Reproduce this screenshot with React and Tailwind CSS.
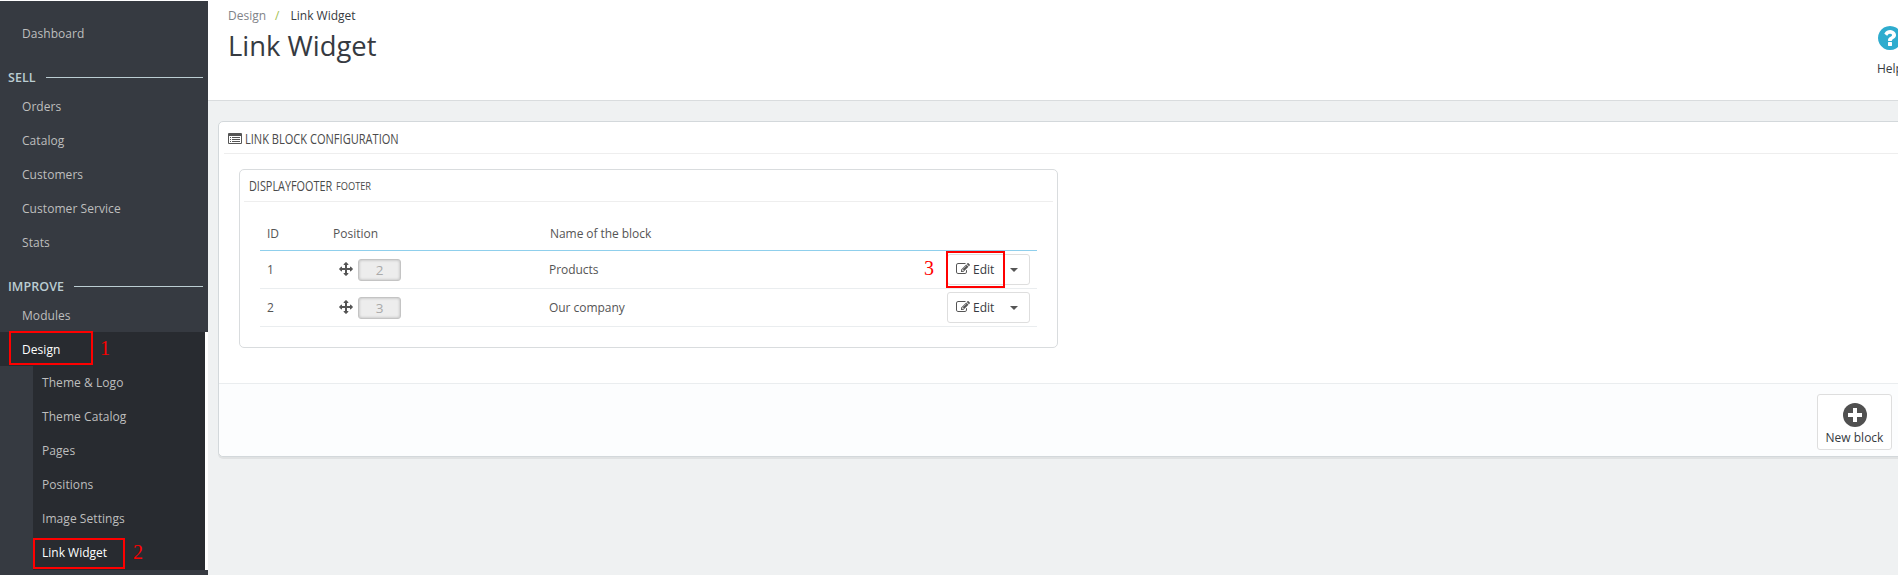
import React from "react";

const ARROWS =
  "M1792 896q0 26-19 45l-256 256q-19 19-45 19t-45-19-19-45v-128h-384v384h128q26 0 45 19t19 45-19 45l-256 256q-19 19-45 19t-45-19l-256-256q-19-19-19-45t19-45 45-19h128v-384h-384v128q0 26-19 45t-45 19-45-19l-256-256q-19-19-19-45t19-45l256-256q19-19 45-19t45 19 19 45v128h384v-384h-128q-26 0-45-19t-19-45 19-45l256-256q19-19 45-19t45 19l256 256q19 19 19 45t-19 45-45 19h-128v384h384v-128q0-26 19-45t45-19 45 19l256 256q19 19 19 45z";
const PENCIL =
  "M888 1184l116-116-152-152-116 116v56h96v96h56zm440-720q-16-16-33 1l-350 350q-17 17-1 33t33-1l350-350q17-17 1-33zm80 594v190q0 119-84.5 203.5t-203.5 84.5h-832q-119 0-203.5-84.5t-84.5-203.5v-832q0-119 84.5-203.5t203.5-84.5h832q63 0 117 25 15 7 18 23 3 17-9 29l-49 49q-14 14-32 8-23-6-45-6h-832q-66 0-113 47t-47 113v832q0 66 47 113t113 47h832q66 0 113-47t47-113v-126q0-13 9-22l64-64q15-15 35-7t20 29zm-96-738l288 288-672 672h-288v-288zm444 132l-92 92-288-288 92-92q28-28 68-28t68 28l152 152q28 28 28 68t-28 68z";
const QUESTION =
  "M1024 1376v-192q0-14-9-23t-23-9h-192q-14 0-23 9t-9 23v192q0 14 9 23t23 9h192q14 0 23-9t9-23zm256-672q0-88-55.5-163t-138.5-116-170-41q-243 0-371 213-15 24 8 42l132 100q7 6 19 6 16 0 25-12 53-68 86-92 34-24 86-24 48 0 85.5 26t37.5 59q0 38-20 61t-68 45q-63 28-115.5 86.5t-52.5 125.5v36q0 14 9 23t23 9h192q14 0 23-9t9-23q0-19 21.5-49.5t54.5-49.5q32-18 49-28.5t46-35 44.5-48 28-60.5 12.5-81zm384 192q0 209-103 385.5t-279.500 279.500-385.500 103-385.500-103-279.500-279.500-103-385.500 103-385.500 279.500-279.500 385.500-103 385.500 103 279.500 279.500 103 385.500z";

function Glyph({ d, className }) {
  return (
    <svg viewBox="0 0 1792 1792" fill="currentColor" className={className}>
      <path d={d} />
    </svg>
  );
}

function NavItem({ children }) {
  return <a className="flex h-[34px] items-center pl-[22px]">{children}</a>;
}

function NavHeading({ children }) {
  return (
    <div className="flex h-[38px] items-center pr-[5px] pl-2 text-[#bbcdd2]">
      <span className="mr-[10px] pt-[2px] text-[12.5px] font-semibold">{children}</span>
      <span className="h-px flex-1 bg-[#bbcdd2]" />
    </div>
  );
}

function Sidebar() {
  return (
    <nav className="mt-px flex h-[574px] w-[208px] shrink-0 flex-col bg-[#363a41] pt-4 text-[12px] tracking-[0.06px] text-[#bebebe]">
      <NavItem>Dashboard</NavItem>
      <div className="mt-[7px] -mb-[6px]">
        <NavHeading>SELL</NavHeading>
      </div>
      <NavItem>Orders</NavItem>
      <NavItem>Catalog</NavItem>
      <NavItem>Customers</NavItem>
      <NavItem>Customer Service</NavItem>
      <NavItem>Stats</NavItem>
      <div className="mt-[7px] -mb-[7px]">
        <NavHeading>IMPROVE</NavHeading>
      </div>
      <a className="flex h-[34px] items-center pt-[2px] pl-[22px]">Modules</a>
      <div className="border-r-[3px] border-white bg-[#363a41]">
        <div className="relative bg-[#282b30] text-white">
          <a className="flex h-[34px] items-center pt-[2px] pl-[22px]">Design</a>
          <div className="absolute top-[-1px] left-[9px] h-[34px] w-[84px] border-2 border-[#ff0000]" />
          <Note className="top-[4px] left-[100px]">1</Note>
        </div>
        <div className="ml-[33px] bg-[#282b30]">
          {["Theme & Logo", "Theme Catalog", "Pages", "Positions", "Image Settings"].map((t) => (
            <a key={t} className="flex h-[34px] items-center pl-[9px]">{t}</a>
          ))}
          <div className="relative">
            <a className="flex h-[34px] items-center pl-[9px] tracking-normal text-white">Link Widget</a>
            <div className="absolute top-[2px] left-0 h-[31px] w-[92px] border-2 border-[#ff0000]" />
            <Note className="top-[4px] left-[100px]">2</Note>
          </div>
        </div>
      </div>
    </nav>
  );
}

function Note({ className, children }) {
  return (
    <span className={"absolute font-['Liberation_Serif',serif] text-[20px] leading-6 text-[#ff0000] " + className}>
      {children}
    </span>
  );
}

function Header() {
  return (
    <header className="relative h-[101px] overflow-hidden border-b border-[#d9dcde] bg-white pl-5">
      <div className="flex h-8 items-center text-[12px] text-[#363a41]">
        <span className="text-[#7f8388]">Design</span>
        <span className="mr-[11px] ml-[9px] text-[#a3c04f]">/</span>
        <span>Link Widget</span>
      </div>
      <h1 className="-mt-[5px] text-[27.4px] leading-[38px] text-[#363a41]">Link Widget</h1>
      <div className="absolute top-6 left-[1668px] w-10 text-[#363a41]">
        <Glyph d={QUESTION} className="h-7 w-7 text-[#2eacce]" />
        <div className="ml-px mt-[8px] text-[12px] leading-[18px]">Help</div>
      </div>
    </header>
  );
}

function ListIcon() {
  return (
    <svg width="14" height="11" viewBox="0 0 14 11" fill="#555" className="mt-px">
      <path fillRule="evenodd" d="M1 0h12a1 1 0 0 1 1 1v9a1 1 0 0 1-1 1H1a1 1 0 0 1-1-1V1a1 1 0 0 1 1-1zM1 3v7h12V3z" />
      <path d="M2 4h1v1H2zM4 4h8v1H4zM2 6h1v1H2zM4 6h8v1H4zM2 8h1v1H2zM4 8h8v1H4z" />
    </svg>
  );
}

function Row({ id, position, name, marked }) {
  return (
    <div className="flex h-[38px] items-center border-b border-[#eaedef]">
      <span className="w-[77px] pt-px pl-[7px]">{id}</span>
      <span className="flex w-[212px] items-center pl-[2px]">
        <Glyph d={ARROWS} className="-mt-px h-[14px] w-[14px] text-[#555]" />
        <span className="ml-[5px] flex h-[22px] w-[43px] items-center justify-center rounded-[3px] border border-[#c4c4c4] bg-[#ededed] pt-px text-[13.5px] text-[#aaa] shadow-[inset_0_0_3px_rgba(0,0,0,0.25)]">
          {position}
        </span>
      </span>
      <span className="flex-1 pt-px tracking-[-0.04px]">{name}</span>
      <span className="relative mr-[7px] flex h-[31px] w-[83px] items-center rounded-[3px] border border-[#dedede] bg-white text-[#363a41]">
        <Glyph d={PENCIL} className="-mt-px ml-2 h-[14px] w-[14px] text-[#555]" />
        <span className="ml-[3px] w-[22px] pt-px">Edit</span>
        <svg width="8" height="4" viewBox="0 0 8 4" fill="#555" className="ml-[15px]">
          <path d="M0 0h8L4 4z" />
        </svg>
        {marked && (
          <>
            <span className="absolute top-[-4px] left-[-2px] h-[37px] w-[59px] border-2 border-[#ff0000]" />
            <Note className="top-[1px] left-[-24px]">3</Note>
          </>
        )}
      </span>
    </div>
  );
}

export default function App() {
  return (
    <div className="flex h-[575px] w-full overflow-hidden bg-white font-['Open_Sans',sans-serif]">
      <Sidebar />
      <main className="min-w-0 flex-1 overflow-hidden bg-[#eff1f2]">
        <Header />
        <section className="mt-5 ml-[10px] w-[1700px] rounded-[5px] border border-[#d3d8db] bg-white text-[12px] text-[#555] shadow-[0_2px_0_rgba(0,0,0,0.06)]">
          <h2 className="ml-[5px] flex h-8 items-center border-b border-[#eee] pl-1">
            <ListIcon />
            <span className="ml-[3px] w-[155px] origin-left scale-x-[0.79] pt-[2px] text-[14px] whitespace-nowrap text-[#4a4a4a]">LINK BLOCK CONFIGURATION</span>
          </h2>
          <div className="mt-[15px] ml-5 h-[179px] w-[819px] rounded-[5px] border border-[#d9dcde]">
            <h3 className="mx-[4px] flex h-8 items-center border-b border-[#eee] pl-[5px] whitespace-nowrap text-[#4a4a4a]">
              <span className="w-[87px] origin-left scale-x-[0.775] text-[14px]">DISPLAYFOOTER</span>
              <span className="origin-left scale-x-[0.84] pt-[2px] text-[11px]">FOOTER</span>
            </h3>
            <div className="mt-[14px] ml-5 w-[777px]">
              <div className="flex h-[35px] items-center border-b border-[#8fcfec] pt-px">
                <span className="w-[73px] pl-[7px]">ID</span>
                <span className="w-[217px]">Position</span>
                <span className="tracking-[-0.06px]">Name of the block</span>
              </div>
              <Row id="1" position="2" name="Products" marked />
              <Row id="2" position="3" name="Our company" />
            </div>
          </div>
          <footer className="mt-[35px] h-[73px] rounded-b-[5px] border-t border-[#eaedef] bg-[#fcfdfe]">
            <button className="mt-[10px] ml-[1598px] flex h-14 w-[75px] flex-col items-center rounded-[3px] border border-[#dedede] bg-white pt-2 text-[#363a41]">
              <svg width="24" height="24" viewBox="0 0 24 24">
                <circle cx="12" cy="12" r="12" fill="#505050" />
                <path d="M10 5h4v5h5v4h-5v5h-4v-5H5v-4h5z" fill="#fff" />
              </svg>
              <span className="mt-[2px] leading-[18px] whitespace-nowrap">New block</span>
            </button>
          </footer>
        </section>
      </main>
    </div>
  );
}
